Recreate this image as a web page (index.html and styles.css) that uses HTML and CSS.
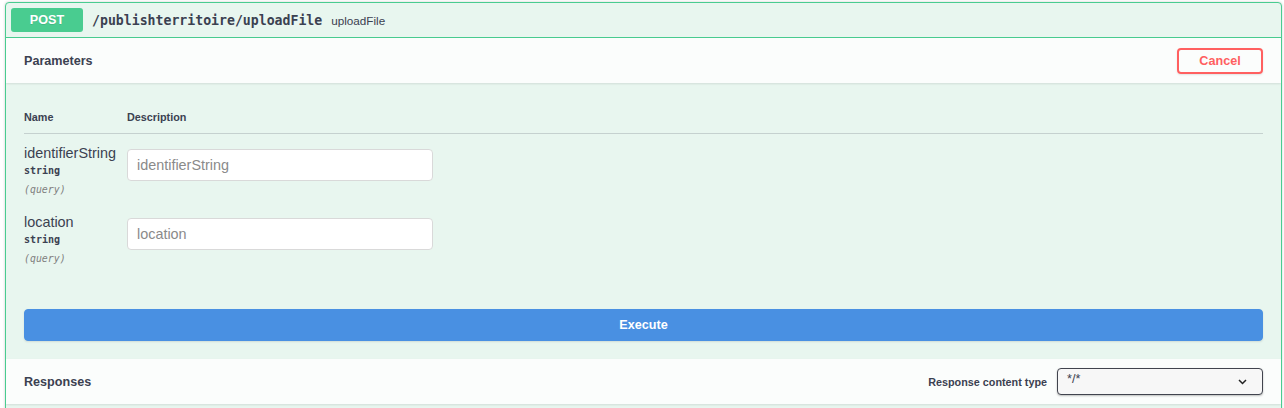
FILE: index.html
```html
<!DOCTYPE html>
<html lang="en">
<head>
<meta charset="utf-8">
<title>POST /publishterritoire/uploadFile</title>
<link rel="stylesheet" href="styles.css">
</head>
<body>
<div class="opblock">
  <div class="summary">
    <span class="method">POST</span>
    <span class="path">/publishterritoire/uploadFile</span>
    <span class="summary-desc">uploadFile</span>
  </div>
  <div class="section-header">
    <h4 class="section-title">Parameters</h4>
    <button class="btn-cancel" type="button">Cancel</button>
  </div>
  <div class="params">
    <div class="params-head">
      <div class="col-name">Name</div>
      <div class="col-desc">Description</div>
    </div>
    <div class="param-row">
      <div class="col-name">
        <div class="param-name">identifierString</div>
        <div class="param-type">string</div>
        <div class="param-in">(query)</div>
      </div>
      <div class="col-desc">
        <input class="param-input" type="text" placeholder="identifierString">
      </div>
    </div>
    <div class="param-row">
      <div class="col-name">
        <div class="param-name">location</div>
        <div class="param-type">string</div>
        <div class="param-in">(query)</div>
      </div>
      <div class="col-desc">
        <input class="param-input" type="text" placeholder="location">
      </div>
    </div>
  </div>
  <div class="execute-wrapper">
    <button class="btn-execute" type="button">Execute</button>
  </div>
  <div class="section-header">
    <h4 class="section-title">Responses</h4>
    <label class="content-type">
      <span class="content-type-label">Response content type</span>
      <span class="select">
        <span class="select-value">*/*</span>
        <svg class="chevron" width="9" height="6" viewBox="0 0 9 6"><path d="M1 1 L4.5 4.5 L8 1" fill="none" stroke="#222" stroke-width="1.5"/></svg>
      </span>
    </label>
  </div>
  <div class="responses-body"></div>
</div>
</body>
</html>
```

FILE: styles.css
```css
* { box-sizing: border-box; }

body {
  margin: 0;
  padding: 2px 2px 0 5px;
  background: #ffffff;
  font-family: "Liberation Sans", Arial, sans-serif;
  color: #3b4151;
}

.opblock {
  border: 1px solid #49cc90;
  border-radius: 4px;
  background: #e8f6ef;
  box-shadow: 0 0 3px rgba(0, 0, 0, 0.19);
  overflow: hidden;
}

.summary {
  display: flex;
  align-items: center;
  padding: 5px;
  border-bottom: 1px solid #49cc90;
}

.method {
  display: inline-flex;
  align-items: center;
  justify-content: center;
  width: 72px;
  height: 24px;
  border-radius: 3px;
  background: #49cc90;
  color: #ffffff;
  font-size: 12.6px;
  font-weight: 700;
  text-shadow: 0 1px 0 rgba(0, 0, 0, 0.1);
}

.path {
  padding: 0 9px;
  font-family: "DejaVu Sans Mono", "Liberation Mono", monospace;
  font-size: 13.2px;
  font-weight: 700;
  color: #3b4151;
}

.summary-desc {
  font-size: 11.7px;
  color: #3b4151;
}

.section-header {
  display: flex;
  align-items: center;
  justify-content: space-between;
  min-height: 45px;
  padding: 0 18px;
  background: rgba(255, 255, 255, 0.8);
  box-shadow: 0 1px 2px rgba(0, 0, 0, 0.1);
}

.section-title {
  margin: 0;
  font-size: 12.6px;
  font-weight: 700;
  color: #3b4151;
}

.btn-cancel {
  width: 86px;
  height: 26px;
  padding: 0;
  border: 2px solid #ff6060;
  border-radius: 4px;
  background: transparent;
  color: #ff6060;
  font-family: "Liberation Sans", Arial, sans-serif;
  font-size: 12.6px;
  font-weight: 700;
  box-shadow: 0 1px 2px rgba(0, 0, 0, 0.1);
}

.params {
  padding: 18px 18px 18px;
}

.params-head {
  display: flex;
  padding: 10px 0 9px;
  border-bottom: 1px solid rgba(59, 65, 81, 0.2);
  font-size: 10.8px;
  font-weight: 700;
  line-height: 13px;
}

.col-name {
  width: 103px;
  flex: none;
}

.col-desc {
  flex: 1;
}

.param-row {
  display: flex;
  padding: 9px 0 5px;
}

.param-name {
  font-size: 14.4px;
  line-height: 20px;
}

.param-type {
  font-family: "DejaVu Sans Mono", "Liberation Mono", monospace;
  font-size: 10px;
  font-weight: 700;
  line-height: 16px;
}

.param-in {
  padding-top: 2px;
  font-family: "DejaVu Sans Mono", "Liberation Mono", monospace;
  font-size: 9.9px;
  font-style: italic;
  line-height: 17px;
  color: #808080;
}

.param-input {
  display: block;
  width: 306px;
  height: 32px;
  margin-top: 6px;
  padding: 0 9px;
  border: 1px solid #d9d9d9;
  border-radius: 4px;
  background: #ffffff;
  font-family: "Liberation Sans", Arial, sans-serif;
  font-size: 14.4px;
  color: #3b4151;
}

.param-input::placeholder {
  color: #8a8a8a;
}

.execute-wrapper {
  padding: 19px 18px 18px;
}

.btn-execute {
  display: block;
  width: 100%;
  height: 32px;
  border: 1px solid #4990e2;
  border-radius: 4px;
  background: #4990e2;
  color: #ffffff;
  font-family: "Liberation Sans", Arial, sans-serif;
  font-size: 12.6px;
  font-weight: 700;
  box-shadow: 0 1px 2px rgba(0, 0, 0, 0.1);
}

.content-type {
  display: flex;
  align-items: center;
}

.content-type-label {
  margin-right: 10px;
  font-size: 10.8px;
  font-weight: 700;
}

.select {
  display: flex;
  align-items: center;
  justify-content: space-between;
  width: 206px;
  height: 27px;
  padding: 0 15px 0 9px;
  border: 1.5px solid #41444e;
  border-radius: 4px;
  background: #f7f7f7;
  box-shadow: 0 1px 2px rgba(0, 0, 0, 0.25);
  font-size: 12.6px;
  color: #3b4151;
}

.select-value {
  margin-top: -6px;
}

.responses-body {
  height: 40px;
}
```
